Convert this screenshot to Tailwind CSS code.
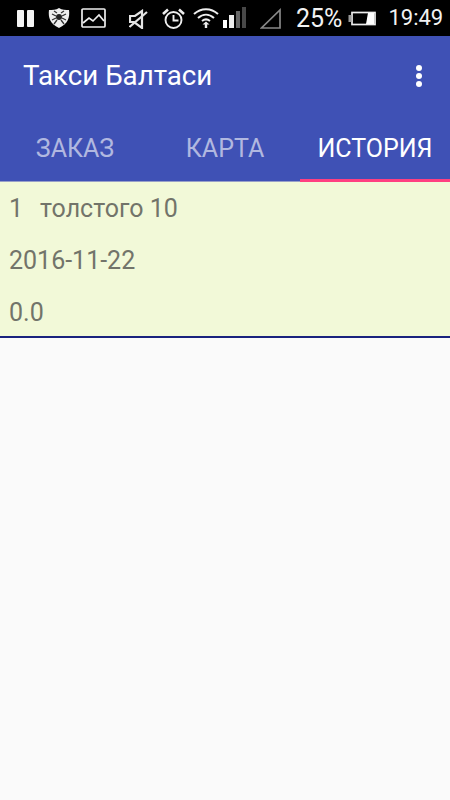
<!doctype html>
<html lang="ru">
<head>
  <meta charset="utf-8">
  <meta name="viewport" content="width=device-width, initial-scale=1">
  <title>Такси Балтаси</title>
  <script src="https://cdn.jsdelivr.net/npm/@tailwindcss/browser@4"></script>
</head>
<body class="bg-[#fafafa] h-[800px] w-[450px] overflow-hidden font-['Roboto',sans-serif]">

<!-- status bar -->
<div class="h-[36px] bg-black flex items-center text-white">
  <svg class="w-[17px] h-[17px] ml-[17px]" viewBox="0 0 17 17" fill="#f4f4f4"><rect x="0" y="0" width="7" height="17" rx="1"/><rect x="10" y="0" width="7" height="17" rx="1"/></svg>
  <!-- dr.web shield -->
  <svg class="w-[22px] h-[20px] ml-[14px] -mt-[1px]" viewBox="0 0 22 20">
    <path d="M11 0 C14 2 18 2 21 2 C22 9 20 16 11 20 C2 16 0 9 1 2 C4 2 8 2 11 0Z" fill="#eee"/>
    <circle cx="11" cy="9" r="3" fill="#222"/>
    <path d="M9 5L6 3M13 5L16 3M8 8L4 6M14 8L18 6M8 10L4 12M14 10L18 12M9 12L6 16M13 12L16 16" stroke="#333" stroke-width="1.300" fill="none"/>
  </svg>
  <svg class="w-[25px] h-[20px] ml-[11px] -mt-[1px]" viewBox="0 0 25 20" fill="none" stroke="#eee" stroke-width="1.700"><rect x="1" y="1" width="23" height="18" rx="1"/><path d="M2 15l6-5 4 3 6-6 5 6"/></svg>
  <svg class="w-[19px] h-[20px] ml-[23px] mt-[2px]" viewBox="0 0 19 20" fill="none" stroke="#e4e4e4" stroke-width="2.200"><path d="M1 7v6h4l8 6V2L6 7z"/><path d="M0.500 18L18 3"/></svg>
  <svg class="w-[23px] h-[21px] ml-[14px]" viewBox="0 0 23 21" fill="none" stroke="#eee" stroke-width="1.900"><circle cx="11.500" cy="12" r="8"/><path d="M11.500 7V12.500H16.500"/><path d="M1 6L6 1.500M22 6L17 1.500" stroke-width="2.600"/></svg>
  <svg class="w-[26px] h-[20px] ml-[8px] -mt-[1px]" viewBox="0 0 26 20" fill="none" stroke="#eee" stroke-width="2"><path d="M1 6C8 -0.500 18 -0.500 25 6"/><path d="M5 10C10 5.500 16 5.500 21 10"/><path d="M9 13C11.500 11 14.500 11 17 13"/><path d="M13 13.500l3.500 3h-2.300v3.500h-2.400v-3.500h-2.300z" fill="#eee" stroke="none"/></svg>
  <div class="flex items-end h-[21px] ml-[4px] gap-[2px] -mt-[1px]">
    <span class="w-[4px] h-[8px] bg-white"></span>
    <span class="w-[5px] h-[13px] bg-[#eee]"></span>
    <span class="w-[4px] h-[17px] bg-[#666]"></span>
    <span class="w-[4px] h-[21px] bg-[#484848]"></span>
  </div>
  <svg class="w-[21px] h-[21px] ml-[14px]" viewBox="0 0 21 21" fill="none" stroke="#888" stroke-width="1.700"><path d="M1.500 20H20V2z"/></svg>
  <span class="ml-[15px] text-[25px] leading-none text-[#f2f2f2]">25%</span>
  <svg class="w-[28px] h-[15px] ml-[6px]" viewBox="0 0 28 15" fill="none"><rect x="4" y="1.500" width="23" height="12" stroke="#eee" stroke-width="1.700"/><rect x="0.500" y="4" width="3" height="7" fill="#999"/><path d="M20 2h6v11h-8z" fill="#fff"/></svg>
  <span class="ml-[12px] text-[22px] leading-none text-[#f2f2f2]">19:49</span>
</div>

<!-- toolbar + tabs -->
<div class="bg-[#3f51b5]">
  <div class="h-[81px] flex items-center justify-between pl-[23px] pr-[28px]">
    <span class="text-white text-[27.7px] leading-none -mt-[1px]">Такси Балтаси</span>
    <div class="flex flex-col gap-[2px] -mt-[2px]">
      <span class="w-[6px] h-[6px] rounded-full bg-white"></span>
      <span class="w-[6px] h-[6px] rounded-full bg-white"></span>
      <span class="w-[6px] h-[6px] rounded-full bg-white"></span>
    </div>
  </div>
  <div class="grid grid-cols-3 h-[65px]">
    <div class="flex items-center justify-center text-[25px] text-white/60 border-b border-[#98a0c8]">ЗАКАЗ</div>
    <div class="flex items-center justify-center text-[25px] text-white/60 border-b border-[#98a0c8]">КАРТА</div>
    <div class="flex items-center justify-center text-[25px] text-white pt-[2px] border-b-[3px] border-[#ff4081]">ИСТОРИЯ</div>
  </div>
</div>

<!-- history list -->
<div class="h-[156px] bg-[#f2f9d8] border-b-[2px] border-[#1a237e] text-[#72746a] text-[25px] leading-none pl-[9px] flex flex-col">
  <div class="h-[52px] flex items-center gap-[17px]"><span>1</span><span>толстого 10</span></div>
  <div class="h-[52px] flex items-center">2016-11-22</div>
  <div class="h-[50px] pt-[2px] flex items-center">0.0</div>
</div>

</body>
</html>
